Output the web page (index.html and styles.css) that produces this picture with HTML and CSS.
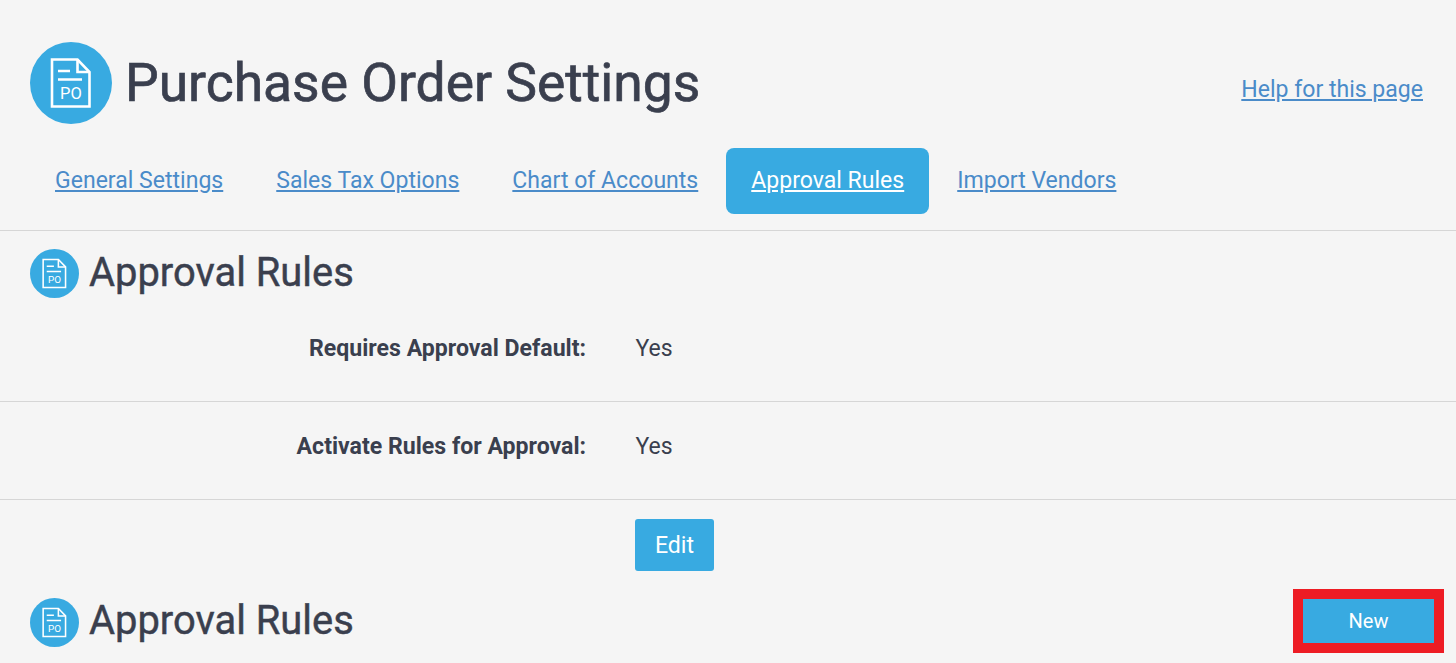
FILE: index.html
```html
<!DOCTYPE html>
<html lang="en">
<head>
  <meta charset="UTF-8" />
  <title>Purchase Order Settings</title>
  <link rel="stylesheet" href="styles.css">
</head>
<body>
  <!-- Header -->
  <div class="page-header">
    <div class="page-title">
      <svg class="icon-large" viewBox="0 0 82 82">
        <circle cx="41" cy="41" r="41" fill="#38aae1"/>
        <path d="M22 17.5H47.5L59.5 30V64.5H22Z" class="icon-line"/>
        <path d="M47.5 17.5V30H59.5" class="icon-line"/>
        <path d="M28 29H40M28 37.5H52" class="icon-line"/>
        <text x="41" y="57" class="icon-text">PO</text>
      </svg>
      <h1>Purchase Order Settings</h1>
    </div>
    <a class="help-link" href="#">Help for this page</a>
  </div>

  <!-- Tabs -->
  <div class="tabs">
    <a href="#" class="tab">General Settings</a>
    <a href="#" class="tab">Sales Tax Options</a>
    <a href="#" class="tab">Chart of Accounts</a>
    <a href="#" class="tab tab-active">Approval Rules</a>
    <a href="#" class="tab">Import Vendors</a>
  </div>

  <!-- Settings -->
  <div class="section-title">
    <svg class="icon-small" viewBox="0 0 82 82">
      <circle cx="41" cy="41" r="41" fill="#38aae1"/>
      <path d="M22 17.5H47.5L59.5 30V64.5H22Z" class="icon-line"/>
      <path d="M47.5 17.5V30H59.5" class="icon-line"/>
      <path d="M28 29H40M28 37.5H52" class="icon-line"/>
      <text x="41" y="57" class="icon-text">PO</text>
    </svg>
    <h2>Approval Rules</h2>
  </div>

  <div class="field-row field-first">
    <div class="field-label">Requires Approval Default:</div>
    <div class="field-value">Yes</div>
  </div>
  <div class="field-row field-second">
    <div class="field-label">Activate Rules for Approval:</div>
    <div class="field-value">Yes</div>
  </div>
  <div class="edit-row">
    <a href="#" class="edit-btn">Edit</a>
  </div>

  <!-- Rules list -->
  <div class="list-header">
    <div class="section-title-plain">
      <svg class="icon-small" viewBox="0 0 82 82">
        <circle cx="41" cy="41" r="41" fill="#38aae1"/>
        <path d="M22 17.5H47.5L59.5 30V64.5H22Z" class="icon-line"/>
        <path d="M47.5 17.5V30H59.5" class="icon-line"/>
        <path d="M28 29H40M28 37.5H52" class="icon-line"/>
        <text x="41" y="57" class="icon-text">PO</text>
      </svg>
      <h2>Approval Rules</h2>
    </div>
    <div class="new-highlight">
      <a href="#" class="new-btn">New</a>
    </div>
  </div>
</body>
</html>
```

FILE: styles.css
```css
/* Basic Reset */
* { margin: 0; padding: 0; box-sizing: border-box; }

html, body { height: 663px; overflow: hidden; }

body {
  font-family: Roboto, "Liberation Sans", sans-serif;
  background: #f5f5f5;
  color: #3a3f4e;
}

a { color: #4a8bc9; }

.icon-line {
  fill: none;
  stroke: #fff;
  stroke-width: 2.6;
}

.icon-text {
  font-family: Roboto, sans-serif;
  font-size: 16.5px;
  fill: #fff;
  text-anchor: middle;
}

.icon-large { width: 82px; height: 82px; display: block; }
.icon-small { width: 49px; height: 49px; display: block; }

/* Header */
.page-header {
  display: flex;
  align-items: center;
  justify-content: space-between;
  padding: 42px 33px 0 30px;
}

.page-title { display: flex; align-items: center; gap: 13px; }

.page-title h1 {
  font-size: 53.4px;
  font-weight: 400;
  -webkit-text-stroke: 0.7px #3a3f4e;
  line-height: 82px;
  color: #3a3f4e;
}

.help-link { font-size: 23.05px; margin-top: 13px; }

/* Tabs */
.tabs {
  display: flex;
  align-items: center;
  gap: 3px;
  height: 83px;
  margin-top: 24px;
  padding: 0 0 17px 30px;
  border-bottom: 1px solid #d6d6d6;
}

.tab {
  font-size: 23.05px;
  line-height: 66px;
  padding: 0 25px;
  border-radius: 8px;
}

.tab-active {
  background: #38aae1;
  color: #fff;
}

/* Section title */
.section-title,
.section-title-plain {
  display: flex;
  align-items: center;
  gap: 10px;
}

.section-title { padding: 18px 0 0 30px; }

h2 {
  font-size: 39.9px;
  font-weight: 400;
  -webkit-text-stroke: 0.45px #3a3f4e;
  line-height: 46px;
  padding-bottom: 2px;
  color: #3a3f4e;
}

/* Fields */
.field-row {
  display: flex;
  align-items: center;
  border-bottom: 1px solid #d6d6d6;
  font-size: 23.1px;
}

.field-first { height: 104px; padding-bottom: 2px; }
.field-second { height: 98px; padding-bottom: 8px; }

.field-label {
  width: 586px;
  text-align: right;
  font-weight: 700;
}

.field-value { margin-left: 49.5px; font-size: 23px; }

.edit-row { padding: 19px 0 0 635px; }

.edit-btn {
  display: block;
  width: 79px;
  height: 52px;
  line-height: 54px;
  text-align: center;
  background: #38aae1;
  color: #fff;
  border-radius: 3px;
  font-size: 23.1px;
  text-decoration: none;
}

/* Rules list header */
.list-header {
  display: flex;
  align-items: center;
  justify-content: space-between;
  margin-top: 18px;
  padding: 0 12px 0 30px;
}

.section-title-plain { margin-top: 2px; }

.new-highlight { border: 10px solid #ed1c24; }

.new-btn {
  display: block;
  width: 131px;
  height: 44px;
  line-height: 44px;
  text-align: center;
  background: #38aae1;
  color: #fff;
  font-size: 20px;
  text-decoration: none;
}
```
